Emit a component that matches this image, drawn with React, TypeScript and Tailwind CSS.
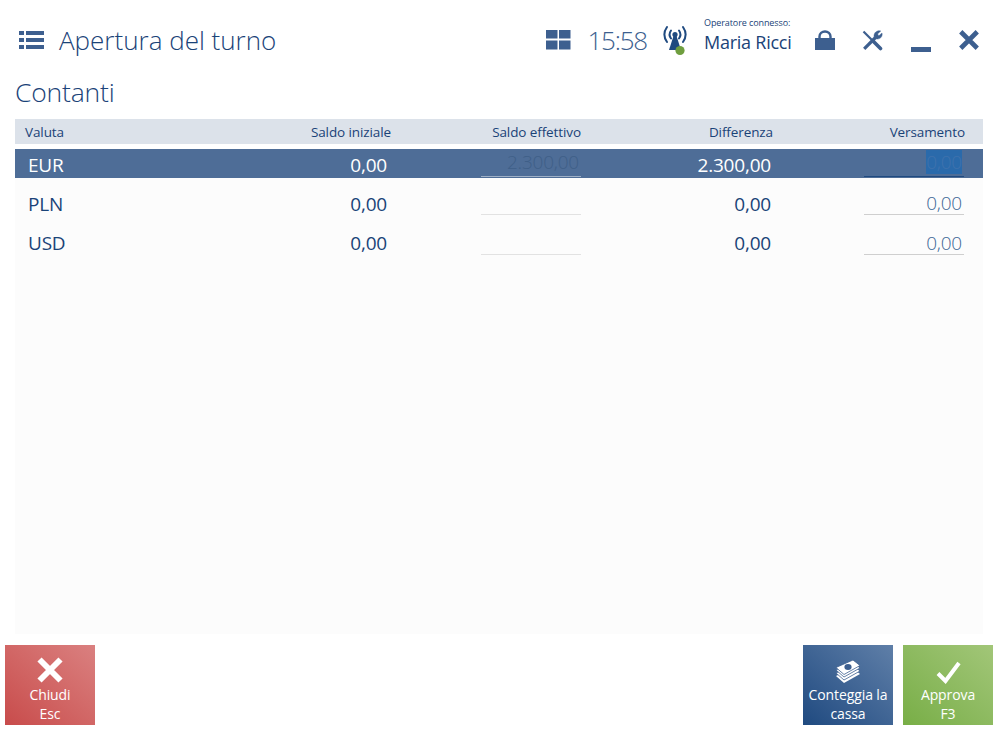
import type { ReactNode } from "react";

const font = "font-['Open_Sans','Noto_Sans',sans-serif]";

type Row = {
  code: string;
  initial: string;
  actual?: string;
  diff: string;
  deposit: string;
  selected?: boolean;
};

const rows: Row[] = [
  { code: "EUR", initial: "0,00", actual: "2.300,00", diff: "2.300,00", deposit: "0,00", selected: true },
  { code: "PLN", initial: "0,00", diff: "0,00", deposit: "0,00" },
  { code: "USD", initial: "0,00", diff: "0,00", deposit: "0,00" },
];

function MenuIcon() {
  return (
    <svg width="26" height="20" viewBox="0 0 26 20" fill="#3d5f8f">
      <rect x="0" y="1" width="5" height="4" />
      <rect x="7" y="1" width="18" height="4" />
      <rect x="0" y="8" width="5" height="4" />
      <rect x="7" y="8" width="18" height="4" />
      <rect x="0" y="15" width="5" height="4" />
      <rect x="7" y="15" width="18" height="4" />
    </svg>
  );
}

function TilesIcon() {
  return (
    <svg width="25" height="20" viewBox="0 0 25 20" fill="#3d5f8f">
      <rect x="0" y="0" width="11.5" height="8.5" />
      <rect x="13" y="0" width="11.5" height="8.5" />
      <rect x="0" y="10.5" width="11.5" height="9" />
      <rect x="13" y="10.5" width="11.5" height="9" />
    </svg>
  );
}

function AntennaIcon() {
  return (
    <svg width="26" height="32" viewBox="0 0 26 32">
      <g fill="none" stroke="#1f4a80" strokeWidth="2" strokeLinecap="round">
        <path d="M5 3 C1.5 8 1.5 13 5 18" />
        <path d="M21 3 C24.5 8 24.5 13 21 18" />
        <path d="M9 6.5 C7.2 9 7.2 12 9 14.5" />
        <path d="M17 6.5 C18.8 9 18.8 12 17 14.5" />
      </g>
      <circle cx="13" cy="10.5" r="2.6" fill="#1f4a80" />
      <path d="M11.5 12 H14.5 L19 26 H7 Z" fill="#1f4a80" />
      <circle cx="18" cy="26.5" r="4.6" fill="#6f9e3f" />
    </svg>
  );
}

function LockIcon() {
  return (
    <svg width="20" height="20" viewBox="0 0 20 20">
      <path d="M4.5 9 V6.5 a5.5 5 0 0 1 11 0 V9" fill="none" stroke="#3d5f8f" strokeWidth="2.4" />
      <rect x="0" y="8" width="20" height="12" fill="#3d5f8f" />
    </svg>
  );
}

function ToolsIcon() {
  return (
    <svg width="21" height="21" viewBox="0 0 21 21" fill="none" stroke="#3d5f8f">
      {/* wrench */}
      <path d="M2.2 18.8 L13.5 7.5" strokeWidth="3.2" />
      <path d="M12 6.5 C11.6 2.8 15 -0.2 18.8 1 L15.6 4 L16.8 5.8 L20 3 C21 6.8 17.6 10 14 8.8 Z" fill="#3d5f8f" strokeWidth="0.4" />
      {/* screwdriver */}
      <path d="M1.5 1.5 L10 10" strokeWidth="2.2" />
      <path d="M11.5 11.5 L18.5 18.5" strokeWidth="3.6" strokeLinecap="round" />
    </svg>
  );
}

function CloseIcon({ color, size }: { color: string; size: number }) {
  return (
    <svg width={size} height={size} viewBox="0 0 20 20">
      <path d="M2.5 2.5 L17.5 17.5 M17.5 2.5 L2.5 17.5" stroke={color} strokeWidth="4.2" fill="none" />
    </svg>
  );
}

function CheckIcon() {
  return (
    <svg width="25" height="23" viewBox="0 0 25 23">
      <path d="M2 12.5 L9.5 20 L23 2" stroke="#fff" strokeWidth="4" fill="none" />
    </svg>
  );
}

function MoneyIcon() {
  return (
    <svg width="26" height="24" viewBox="0 0 26 24">
      <path d="M1 16 L18 8 L25 14 L9 23 Z" fill="#fff" />
      <path d="M1 13 L18 5 L25 11 L9 20 Z" fill="#fff" stroke="#3d5f8f" strokeWidth="0.8" />
      <path d="M1 10 L18 2 L25 8 L9 17 Z" fill="#fff" stroke="#3d5f8f" strokeWidth="0.8" />
      <path d="M1 7.5 L18 0 L25 5.5 L9 14.5 Z" fill="#fff" stroke="#3d5f8f" strokeWidth="0.8" />
      <ellipse cx="13" cy="7" rx="3.6" ry="3" fill="#3d5f8f" />
    </svg>
  );
}

function ActionButton({ icon, lines, bg }: { icon: ReactNode; lines: string[]; bg: string }) {
  return (
    <div className={`flex h-20 w-[90px] flex-col items-center text-[14px] leading-[19px] tracking-[-0.1px] text-white ${bg}`}>
      <div className="flex h-[40px] items-end justify-center pb-px">{icon}</div>
      <div className="text-center">
        {lines.map((line) => (
          <div key={line}>{line}</div>
        ))}
      </div>
    </div>
  );
}

function Field({ value, selected, kind }: { value?: string; selected?: boolean; kind: "actual" | "deposit" }) {
  const border = selected
    ? kind === "deposit"
      ? "border-[#1f4a80]"
      : "border-[#9fb0c6]"
    : kind === "deposit"
      ? "border-[#cfcfcf]"
      : "border-[#e2e2e2]";
  return (
    <div
      className={`ml-auto flex h-[26px] w-[100px] items-center justify-end border-b font-light ${border} ${
        kind === "actual" ? "" : "pr-[2px]"
      } ${selected ? "mb-px pb-[2px]" : "mb-[3px] pt-[3px]"}`}
    >
      {value && (
        <span
          className={
            selected
              ? kind === "deposit"
                ? "bg-[#2a6aab] leading-[24px] text-[#3f72ad]"
                : "pr-[2px] text-[#3f5f88]"
              : "text-[#3d6796]"
          }
        >
          {value}
        </span>
      )}
    </div>
  );
}

export default function App() {
  return (
    <div className={`flex h-[731px] w-[1000px] flex-col bg-white text-[#1a4378] ${font}`}>
      {/* Top bar */}
      <div className="flex h-[70px] shrink-0 items-center pl-[19px] pr-[20px] pt-[10px]">
        <MenuIcon />
        <h1 className="ml-[14px] text-[26px] font-light leading-none">Apertura del turno</h1>
        <div className="ml-auto flex items-center">
          <TilesIcon />
          <span className="ml-[16px] text-[26px] font-light leading-none tracking-[-1.2px] text-[#3d5f8f]">15:58</span>
          <span className="ml-[15px]">
            <AntennaIcon />
          </span>
          <div className="ml-[16px] -mt-[10px] flex w-[111px] flex-col">
            <span className="text-[9px] leading-[10px] tracking-[-0.1px]">Operatore connesso:</span>
            <span className="mt-[4px] text-[18px] leading-[20px] tracking-[-0.25px]">Maria Ricci</span>
          </div>
          <LockIcon />
          <span className="ml-[27px]">
            <ToolsIcon />
          </span>
          <span className="ml-[28px] mt-[18px] h-[5px] w-5 bg-[#3d5f8f]" />
          <span className="ml-[27px]">
            <CloseIcon color="#3d5f8f" size={22} />
          </span>
        </div>
      </div>

      <h2 className="ml-[15px] mt-[5px] text-[26.5px] font-light leading-[34px] tracking-[-0.2px]">Contanti</h2>

      {/* Table */}
      <div className="ml-[15px] mr-[17px] mt-[10px] flex h-[515px] flex-col bg-[#fcfcfc]">
        <div className="grid h-[25px] shrink-0 grid-cols-[200px_176px_190px_192px_192px_18px] items-center bg-[#dce2ea] pt-[2px] text-[13.5px] tracking-[-0.1px]">
          <span className="pl-[10px]">Valuta</span>
          <span className="text-right">Saldo iniziale</span>
          <span className="text-right">Saldo effettivo</span>
          <span className="text-right">Differenza</span>
          <span className="text-right">Versamento</span>
        </div>
        <div className="h-[5px] shrink-0 bg-white" />
        {rows.map((row) => {
          const cell = row.selected ? "pt-[2px]" : "";
          return (
            <div
              key={row.code}
              className={`grid grid-cols-[200px_172px_194px_190px_193px_19px] items-center text-[19px] tracking-[-0.2px] ${
                row.selected ? "mb-[6px] h-[29px] bg-[#4e6d97] text-white" : "h-[39.5px]"
              }`}
            >
              <span className={`pl-[13px] ${cell}`}>{row.code}</span>
              <span className={`text-right ${cell}`}>{row.initial}</span>
              <Field value={row.actual} selected={row.selected} kind="actual" />
              <span className={`text-right ${cell}`}>{row.diff}</span>
              <Field value={row.deposit} selected={row.selected} kind="deposit" />
            </div>
          );
        })}
      </div>

      {/* Actions */}
      <div className="mt-[11px] flex pl-[5px] pr-[7px]">
        <ActionButton
          icon={<CloseIcon color="#fff" size={28} />}
          lines={["Chiudi", "Esc"]}
          bg="bg-linear-to-tr from-[#c84b4b] to-[#da8080]"
        />
        <div className="ml-auto flex gap-[10px]">
          <ActionButton
            icon={<MoneyIcon />}
            lines={["Conteggia la", "cassa"]}
            bg="bg-linear-to-tr from-[#1f4a80] to-[#5f7fa8]"
          />
          <ActionButton
            icon={<CheckIcon />}
            lines={["Approva", "F3"]}
            bg="bg-linear-to-tr from-[#78ae46] to-[#a2c678]"
          />
        </div>
      </div>
    </div>
  );
}
